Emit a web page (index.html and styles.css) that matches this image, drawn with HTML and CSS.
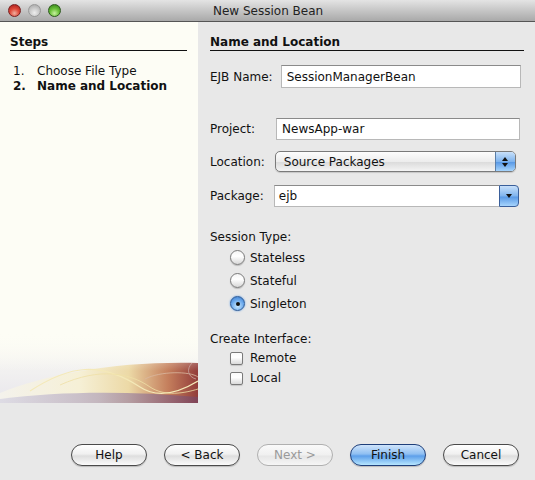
FILE: index.html
```html
<!DOCTYPE html>
<html lang="en">
<head>
    <meta charset="UTF-8">
    <title>New Session Bean</title>
    <link rel="stylesheet" href="styles.css">
</head>
<body>
    <div class="window">
        <div class="titlebar">
            <div class="lights">
                <span class="light red"></span>
                <span class="light gray"></span>
                <span class="light green"></span>
            </div>
            <div class="title">New Session Bean</div>
        </div>

        <div class="main">
            <div class="steps">
                <div class="heading">Steps</div>
                <ol class="step-list">
                    <li><span class="num">1.</span>Choose File Type</li>
                    <li class="current"><span class="num">2.</span>Name and Location</li>
                </ol>
                <svg class="swirl" width="198" height="70" viewBox="0 0 198 70">
                    <defs>
                        <linearGradient id="band" x1="0" y1="0" x2="1" y2="0">
                            <stop offset="0" stop-color="#f4f2ec"/>
                            <stop offset="0.4" stop-color="#f6f0d6"/>
                            <stop offset="0.65" stop-color="#ecd9a6"/>
                            <stop offset="0.85" stop-color="#c47e5c"/>
                            <stop offset="1" stop-color="#923c3a"/>
                        </linearGradient>
                        <linearGradient id="fade" x1="0" y1="0" x2="0" y2="1">
                            <stop offset="0" stop-color="#fdfdf5" stop-opacity="1"/>
                            <stop offset="1" stop-color="#fdfdf5" stop-opacity="0"/>
                        </linearGradient>
                        <linearGradient id="low" x1="0" y1="0" x2="1" y2="0">
                            <stop offset="0" stop-color="#d6d4e2"/>
                            <stop offset="0.5" stop-color="#b4a6bc"/>
                            <stop offset="1" stop-color="#7a4660"/>
                        </linearGradient>
                        <linearGradient id="haze" x1="0" y1="0" x2="0" y2="1">
                            <stop offset="0" stop-color="#fdfdf5"/>
                            <stop offset="1" stop-color="#e8e6ec"/>
                        </linearGradient>
                    </defs>
                    <rect x="0" y="0" width="198" height="70" fill="url(#haze)"/>
                    <path d="M0 60 C50 40 120 28 198 30 L198 70 L0 70 Z" fill="url(#band)"/>
                    <path d="M0 66 C60 58 130 58 198 64 L198 70 L0 70 Z" fill="url(#low)" opacity="0.75"/>
                    <rect x="0" y="0" width="198" height="38" fill="url(#fade)"/>
                    <path d="M30 58 C70 32 100 28 140 54 C155 64 175 62 198 48" fill="none" stroke="#f4e9b8" stroke-width="1.2"/>
                    <path d="M60 52 C100 34 130 40 150 54 C165 64 185 60 198 56" fill="none" stroke="#efe0a6" stroke-width="0.8"/>
                    <path d="M145 46 C160 38 190 38 198 44" fill="none" stroke="#d9b7a0" stroke-width="0.8"/>
                    <path d="M192 30 C186 36 188 44 196 46" fill="none" stroke="#c9a4a0" stroke-width="0.8"/>
                </svg>
            </div>

            <div class="content">
                <div class="heading">Name and Location</div>

                <div class="row first">
                    <label class="label">EJB Name:</label>
                    <div class="field name-field">SessionManagerBean</div>
                </div>

                <div class="row project">
                    <label class="label">Project:</label>
                    <div class="field project-field">NewsApp-war</div>
                </div>

                <div class="row location">
                    <label class="label">Location:</label>
                    <div class="popup">
                        <span class="popup-text">Source Packages</span>
                        <span class="popup-arrows">
                            <svg width="8" height="12" viewBox="0 0 8 12"><path d="M4 1 L7 5 L1 5 Z M1 7 L7 7 L4 11 Z" fill="#111"/></svg>
                        </span>
                    </div>
                </div>

                <div class="row package">
                    <label class="label">Package:</label>
                    <div class="combo">
                        <span class="combo-text">ejb</span>
                        <span class="combo-arrow">
                            <svg width="8" height="6" viewBox="0 0 8 6"><path d="M1 1 L7 1 L4 5 Z" fill="#111"/></svg>
                        </span>
                    </div>
                </div>

                <div class="group-label session">Session Type:</div>
                <div class="options radios">
                    <div class="option"><span class="radio"></span>Stateless</div>
                    <div class="option"><span class="radio"></span>Stateful</div>
                    <div class="option"><span class="radio checked"></span>Singleton</div>
                </div>

                <div class="group-label iface">Create Interface:</div>
                <div class="options checks">
                    <div class="option"><span class="check"></span>Remote</div>
                    <div class="option"><span class="check"></span>Local</div>
                </div>
            </div>
        </div>

        <div class="footer">
            <button class="btn">Help</button>
            <button class="btn">&lt; Back</button>
            <button class="btn disabled">Next &gt;</button>
            <button class="btn default">Finish</button>
            <button class="btn">Cancel</button>
        </div>
    </div>
</body>
</html>
```

FILE: styles.css
```css
body {
    margin: 0;
    font-family: 'DejaVu Sans', 'Liberation Sans', sans-serif;
    font-size: 12px;
    color: #111;
    background: #e8e8e8;
}

.window {
    width: 535px;
    height: 480px;
    display: flex;
    flex-direction: column;
    background: #e8e8e8;
}

.titlebar {
    height: 21px;
    flex: none;
    display: flex;
    align-items: center;
    background: linear-gradient(#e4e4e4, #c6c6c6 50%, #a9a9a9);
    border-bottom: 1px solid #555;
}

.lights {
    display: flex;
    gap: 7px;
    padding-left: 8px;
    width: 160px;
}

.light {
    width: 13px;
    height: 13px;
    border-radius: 50%;
    box-sizing: border-box;
}

.light.red {
    background: radial-gradient(circle at 50% 75%, #f0b0a0 0, #e04a3a 45%, #a01818 100%);
    border: 1px solid #7a2020;
}

.light.gray {
    background: radial-gradient(circle at 50% 70%, #eee 0, #c8c8c8 50%, #a0a0a0 100%);
    border: 1px solid #999;
}

.light.green {
    background: radial-gradient(circle at 50% 75%, #c8f0a0 0, #6cc23a 45%, #2e7a14 100%);
    border: 1px solid #2c5a1c;
}

.title {
    flex: 1;
    padding-left: 45px;
    color: #222;
    font-size: 12px;
}

.main {
    display: flex;
    height: 381px;
    flex: none;
}

.steps {
    width: 198px;
    flex: none;
    background: #fdfdf5;
    display: flex;
    flex-direction: column;
    padding: 13px 0 0 0;
    box-sizing: border-box;
}

.heading {
    font-weight: bold;
    line-height: 15px;
    border-bottom: 1px solid #111;
}

.steps .heading {
    margin: 0 11px 0 10px;
}

.step-list {
    list-style: none;
    margin: 13px 0 0 13px;
    padding: 0;
    line-height: 15px;
}

.step-list .num {
    display: inline-block;
    width: 24px;
}

.step-list .current {
    font-weight: bold;
}

.swirl {
    margin-top: auto;
    display: block;
}

.content {
    flex: 1;
    padding: 13px 11px 0 12px;
}

.row {
    display: flex;
    align-items: center;
}

.row.first {
    margin-top: 14px;
}

.row.project {
    margin-top: 30px;
}

.row.location {
    margin-top: 11px;
}

.row.package {
    margin-top: 13px;
}

.label {
    flex: none;
}

.field {
    background: #fff;
    border: 1px solid #b8b8b8;
    border-top-color: #8a8a8a;
    box-sizing: border-box;
    padding-left: 5px;
    display: flex;
    align-items: center;
}

.name-field {
    margin-left: 8px;
    width: 240px;
    height: 23px;
}

.project-field {
    margin-left: 21px;
    width: 244px;
    height: 22px;
}

.popup {
    margin-left: 10px;
    width: 241px;
    height: 21px;
    box-sizing: border-box;
    border: 1px solid #7a7a7a;
    border-radius: 5px;
    background: linear-gradient(#fdfdfd, #ededed 50%, #dcdcdc 55%, #f4f4f4);
    display: flex;
    align-items: center;
    overflow: hidden;
    box-shadow: 0 1px 1px rgba(0, 0, 0, 0.15);
}

.popup-text {
    flex: 1;
    padding-left: 8px;
}

.popup-arrows,
.combo-arrow {
    width: 19px;
    height: 100%;
    display: flex;
    align-items: center;
    justify-content: center;
    background: linear-gradient(#c8e0fa, #7fb4ee 50%, #5a9ae6 55%, #a6d4fc);
    border-left: 1px solid #5a7ea8;
}

.combo {
    margin-left: 10px;
    width: 245px;
    height: 22px;
    box-sizing: border-box;
    display: flex;
    align-items: center;
}

.combo-text {
    flex: 1;
    height: 100%;
    display: flex;
    align-items: center;
    padding-left: 4px;
    background: #fff;
    border: 1px solid #b8b8b8;
    border-top-color: #8a8a8a;
    border-right: none;
    box-sizing: border-box;
}

.combo-arrow {
    width: 20px;
    box-sizing: border-box;
    border: 1px solid #3a5f9a;
    border-radius: 0 4px 4px 0;
}

.group-label {
    line-height: 15px;
}

.group-label.session {
    margin-top: 23px;
}

.group-label.iface {
    margin-top: 17px;
}

.options {
    padding-left: 20px;
}

.option {
    display: flex;
    align-items: center;
    gap: 5px;
}

.radios .option {
    height: 23px;
}

.radios {
    margin-top: 1px;
}

.checks {
    margin-top: 1px;
}

.checks .option {
    height: 20px;
}

.radio {
    width: 15px;
    height: 15px;
    box-sizing: border-box;
    border-radius: 50%;
    border: 1px solid #7a7a7a;
    background: linear-gradient(#f4f4f4, #ffffff 40%, #d8d8d8);
    box-shadow: 0 1px 1px rgba(0, 0, 0, 0.2);
    display: flex;
    align-items: center;
    justify-content: center;
}

.radio.checked {
    border-color: #2a5a98;
    background: radial-gradient(circle at 50% 70%, #c8e8ff 0, #6aa8ec 55%, #3a78c8 100%);
    box-shadow: 0 0 2px #5a9ae6;
}

.radio.checked::after {
    content: "";
    width: 4px;
    height: 4px;
    border-radius: 50%;
    background: #111;
}

.check {
    width: 13px;
    height: 13px;
    box-sizing: border-box;
    border: 1px solid #7a7a7a;
    border-radius: 2px;
    background: linear-gradient(#fafafa, #ffffff 40%, #dadada);
    box-shadow: 0 1px 1px rgba(0, 0, 0, 0.15);
    margin-right: 2px;
}

.footer {
    flex: 1;
    display: flex;
    align-items: flex-start;
    justify-content: flex-end;
    gap: 17px;
    padding: 41px 16px 0 0;
}

.btn {
    width: 76px;
    height: 22px;
    border: 1px solid #4a4a4a;
    border-radius: 11px;
    background: linear-gradient(#ffffff, #f0f0f0 45%, #dedede 55%, #fbfbfb);
    font-family: inherit;
    font-size: 12px;
    color: #111;
    padding: 0;
    box-shadow: 0 1px 1px rgba(0, 0, 0, 0.2);
}

.btn.disabled {
    color: #9a9a9a;
    border-color: #b0b0b0;
    background: linear-gradient(#fafafa, #f0f0f0 50%, #e6e6e6 55%, #f6f6f6);
    box-shadow: none;
}

.btn.default {
    border-color: #1f3f7a;
    background: linear-gradient(#cfe4fb, #8fbff2 45%, #5d9fea 55%, #b6e6ff);
}
```
